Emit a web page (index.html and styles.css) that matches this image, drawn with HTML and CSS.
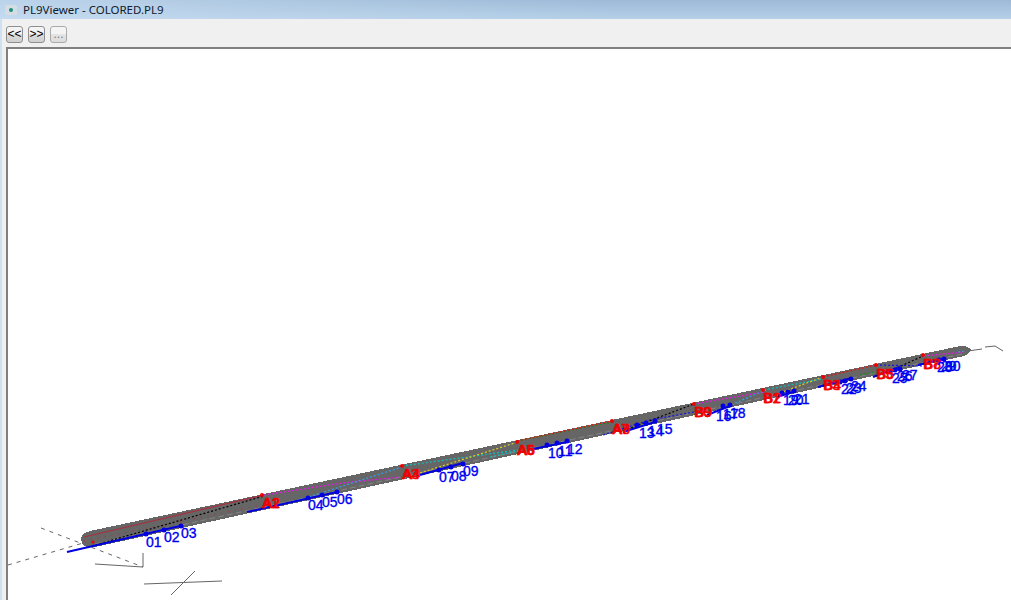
FILE: index.html
```html
<!DOCTYPE html>
<html>
<head>
  <title>PL9Viewer - COLORED.PL9</title>
  <link rel="stylesheet" href="styles.css">
</head>
<body>
  <div class="window">
    <!-- Title bar -->
    <div class="title-bar">
      <svg class="app-icon" width="16" height="16" viewBox="0 0 16 16">
        <rect x="2" y="3" width="12" height="10" rx="2" fill="#d5dde4"/>
        <circle cx="8" cy="8" r="2" fill="#1a8f7c"/>
      </svg>
      <span class="title-text">PL9Viewer - COLORED.PL9</span>
    </div>

    <div class="client">
      <!-- Toolbar -->
      <div class="toolbar">
        <button class="tool-button">&lt;&lt;</button>
        <button class="tool-button">&gt;&gt;</button>
        <button class="tool-button disabled">...</button>
      </div>

      <!-- 3D view -->
      <div class="view">
        <svg class="scene" width="1003" height="551" viewBox="8 49 1003 551">
          <!-- axes -->
          <path class="axis-dash" d="M8 565 L90 541 M41 528 L143 567"/>
          <path class="axis" d="M95 564 L143 567 L143 553"/>
          <path class="axis" d="M144 584 L222 581 M171 595 L195 571"/>
          <path class="axis" d="M968 351 L982 349 M985 347 L995 346 L1003 351"/>

          <!-- pipe -->
          <path class="pipe" d="M90 531 L960 346 Q968 345.5 971 350 Q970 354 962 356.5 L95 547 Q83 549 81 540 Q81 533 90 531 Z"/>
          <path class="pipe-edge" d="M95 544 L962 354"/>

          <!-- centre lines -->
          <path class="line-red solid" d="M84 537 L264 495"/>
          <path class="line-red faint" d="M84 541 L262 505"/>
          <path class="line-black" d="M92 546 L264 496"/>
          <path class="line-magenta" d="M264 495 L342 483 L400 477"/>
          <path class="line-lblue" d="M290 503 L402 467"/>
          <path class="line-cyan" d="M402 466 L518 450"/>
          <path class="line-yellow" d="M420 473 L518 442"/>
          <path class="line-cyan" d="M490 457 L518 451"/>
          <path class="line-green" d="M517 441 L612 422"/>
          <path class="line-red" d="M517 441 L612 421"/>
          <path class="line-blue-dot" d="M603 435 L650 420 L694 412"/>
          <path class="line-black" d="M620 432 L694 404"/>
          <path class="line-magenta" d="M694 404 L764 392"/>
          <path class="line-lblue" d="M735 403 L766 390"/>
          <path class="line-cyan" d="M764 390 L822 379"/>
          <path class="line-yellow" d="M780 393 L823 377"/>
          <path class="line-red" d="M823 377 L876 365"/>
          <path class="line-green" d="M860 375 L876 372"/>
          <path class="line-blue-dot" d="M876 365 L923 366"/>
          <path class="line-black" d="M890 371 L923 356"/>
          <path class="line-magenta" d="M923 356 L964 352"/>
          <path class="line-lblue" d="M958 352 L966 351"/>

          <!-- spool -->
          <path class="spool" d="M67 552 L180 526"/>
          <path class="spool" d="M247 512 L337 492"/>
          <path class="spool" d="M420 475 L463 463"/>
          <path class="spool" d="M533 449 L567 442"/>
          <path class="spool" d="M623 432 L655 422"/>
          <path class="spool" d="M707 415 L730 406"/>
          <path class="spool" d="M777 397 L793 392"/>
          <path class="spool" d="M818 387 L852 378"/>
          <path class="spool" d="M873 377 L900 367"/>
          <path class="spool" d="M918 365 L943 359"/>

          <!-- weld points -->
          <g class="welds">
            <circle cx="146" cy="534" r="2.5"/><circle cx="164" cy="530" r="2.5"/><circle cx="181" cy="526" r="2.5"/>
            <circle cx="308" cy="498" r="2.5"/><circle cx="322" cy="495" r="2.5"/><circle cx="337" cy="492" r="2.5"/>
            <circle cx="439" cy="470" r="2.5"/><circle cx="451" cy="467" r="2.5"/><circle cx="463" cy="464" r="2.5"/>
            <circle cx="547" cy="445" r="2.5"/><circle cx="557" cy="443" r="2.5"/><circle cx="567" cy="441" r="2.5"/>
            <circle cx="637" cy="425" r="2.5"/><circle cx="646" cy="423" r="2.5"/><circle cx="655" cy="421" r="2.5"/>
            <circle cx="723" cy="406" r="2.5"/><circle cx="730" cy="405" r="2.5"/>
            <circle cx="782" cy="393" r="2.5"/><circle cx="788" cy="392" r="2.5"/><circle cx="794" cy="391" r="2.5"/>
            <circle cx="840" cy="382" r="2.5"/><circle cx="845" cy="381" r="2.5"/><circle cx="851" cy="379" r="2.5"/>
            <circle cx="890" cy="372" r="2.5"/><circle cx="895" cy="370" r="2.5"/><circle cx="900" cy="369" r="2.5"/>
            <circle cx="939" cy="360" r="2.5"/><circle cx="944" cy="359" r="2.5"/>
          </g>
          <g class="marks">
            <circle cx="93" cy="542" r="1.5"/><circle cx="262" cy="495" r="2"/><circle cx="402" cy="466" r="2"/>
            <circle cx="517" cy="442" r="2"/><circle cx="612" cy="421" r="2"/><circle cx="694" cy="404" r="2"/>
            <circle cx="763" cy="390" r="2"/><circle cx="823" cy="377" r="2"/><circle cx="876" cy="365" r="2"/>
            <circle cx="923" cy="355" r="2"/>
          </g>

          <!-- red tags -->
          <g class="tag">
            <text x="262" y="508">A1</text><text x="263" y="508">A2</text>
            <text x="402" y="479">A3</text><text x="403" y="479">A4</text>
            <text x="517" y="455">A5</text><text x="518" y="455">A6</text>
            <text x="612" y="434">A7</text><text x="613" y="434">A8</text>
            <text x="694" y="417">B0</text><text x="695" y="417">B9</text>
            <text x="763" y="403">B1</text><text x="764" y="403">B2</text>
            <text x="823" y="390">B3</text><text x="824" y="390">B4</text>
            <text x="876" y="379">B5</text><text x="877" y="379">B6</text>
            <text x="923" y="369">B7</text><text x="924" y="369">B8</text>
          </g>

          <!-- blue numbers -->
          <g class="num">
            <text x="146" y="547">01</text><text x="164" y="542">02</text><text x="181" y="538">03</text>
            <text x="308" y="510">04</text><text x="322" y="507">05</text><text x="337" y="504">06</text>
            <text x="439" y="482">07</text><text x="451" y="481">08</text><text x="463" y="476">09</text>
            <text x="548" y="458">10</text><text x="558" y="456">11</text><text x="567" y="454">12</text>
            <text x="639" y="438">13</text><text x="648" y="436">14</text><text x="657" y="434">15</text>
            <text x="716" y="421">16</text><text x="723" y="419">17</text><text x="730" y="418">18</text>
            <text x="783" y="405">19</text><text x="788" y="405">20</text><text x="794" y="404">21</text>
            <text x="841" y="394">22</text><text x="846" y="393">23</text><text x="851" y="391">24</text>
            <text x="892" y="383">25</text><text x="897" y="381">26</text><text x="902" y="380">27</text>
            <text x="937" y="372">28</text><text x="941" y="371">29</text><text x="945" y="371">30</text>
          </g>
        </svg>
      </div>
    </div>
  </div>
</body>
</html>
```

FILE: styles.css
```css
/* Window layout */
html, body {
  margin: 0;
  height: 100%;
  overflow: hidden;
}

body {
  font-family: "Liberation Sans", Arial, sans-serif;
  background-color: #f0f0f0;
}

.window {
  display: flex;
  flex-direction: column;
  height: 600px;
}

/* Title bar */
.title-bar {
  display: flex;
  align-items: center;
  gap: 4px;
  height: 19px;
  padding-left: 3px;
  box-sizing: border-box;
  background: linear-gradient(to right, rgba(200, 222, 242, 0.7), rgba(160, 190, 220, 0.1) 60%),
    linear-gradient(#9db9d6, #b8d2ea);
  font-family: "Noto Sans", sans-serif;
  font-size: 11.5px;
  color: #10202c;
}

.app-icon {
  flex: none;
}

/* Everything under the title bar, with the light window frame on the left */
.client {
  flex: 1;
  display: flex;
  flex-direction: column;
  border-left: 2px solid #cfe0f2;
}

/* Toolbar */
.toolbar {
  display: flex;
  gap: 5px;
  height: 28px;
  padding: 7px 0 0 4px;
  box-sizing: border-box;
}

.tool-button {
  width: 17px;
  height: 17px;
  padding: 0;
  border: 1px solid #8e8e8e;
  border-radius: 3px;
  background: linear-gradient(#f4f4f4 45%, #dcdcdc 50%, #d0d0d0);
  font-family: "Liberation Sans", sans-serif;
  font-size: 12px;
  line-height: 13px;
  color: #000;
}

.tool-button.disabled {
  background: linear-gradient(#f4f4f4 45%, #e4e4e4 50%, #dcdcdc);
  color: #777;
  border-color: #aaa;
}

/* 3D view */
.view {
  flex: 1;
  margin-left: 4px;
  border-left: 2px solid #808080;
  border-top: 2px solid #808080;
  background-color: #fff;
  overflow: hidden;
}

.scene {
  display: block;
}

.axis {
  fill: none;
  stroke: #666;
  stroke-width: 1;
}

.axis-dash {
  fill: none;
  stroke: #666;
  stroke-width: 1;
  stroke-dasharray: 4 5;
}

.pipe {
  fill: #666;
  shape-rendering: crispEdges;
}

.pipe-edge {
  stroke: #858585;
  stroke-width: 1;
  stroke-dasharray: 6 3;
}

.line-red, .line-black, .line-magenta, .line-lblue, .line-cyan,
.line-yellow, .line-green, .line-blue-dot {
  fill: none;
  stroke-width: 1.2;
  stroke-dasharray: 2 2;
}

.line-red { stroke: #f01010; }
.line-black { stroke: #000; }
.line-magenta { stroke: #f010f0; }
.line-lblue { stroke: #30a0f0; }
.line-cyan { stroke: #10c0c0; }
.line-yellow { stroke: #e0d020; }
.line-green { stroke: #109010; }
.line-blue-dot { stroke: #1010f0; }

.line-red.solid {
  stroke: #a83040;
  stroke-dasharray: none;
}

.line-red.faint {
  stroke: #a83040;
  stroke-dasharray: 1 6;
}

.spool {
  stroke: #0000e0;
  stroke-width: 2;
}

.welds circle {
  fill: #0000e0;
}

.marks circle {
  fill: #f00000;
}

.tag text {
  font-size: 14px;
  fill: #f00000;
  stroke: #f00000;
  stroke-width: 0.5;
}

.num text {
  font-size: 14px;
  fill: #0000f0;
  stroke: #0000f0;
  stroke-width: 0.35;
}
```
